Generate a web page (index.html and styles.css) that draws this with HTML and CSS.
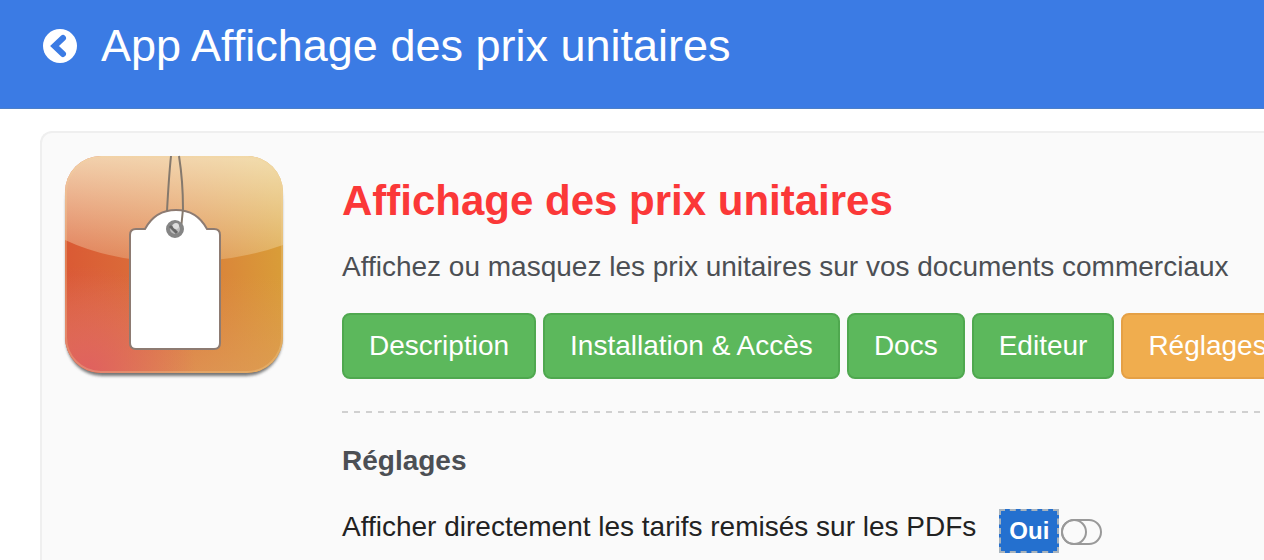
FILE: index.html
```html
<!DOCTYPE html>
<html lang="fr">
<head>
  <meta charset="UTF-8">
  <meta name="viewport" content="width=device-width, initial-scale=1.0">
  <title>App Affichage des prix unitaires</title>
  <link rel="stylesheet" href="styles.css">
</head>
<body>
  <header class="topbar">
    <a href="#" class="back" aria-label="Retour">
      <svg width="34" height="34" viewBox="0 0 34 34" aria-hidden="true">
        <circle cx="17" cy="17" r="17" fill="#fff"/>
        <path d="M20 9 11.500 17 20 25" fill="none" stroke="#3b7be4" stroke-width="6" stroke-linecap="round" stroke-linejoin="miter"/>
      </svg>
    </a>
    <h1>App Affichage des prix unitaires</h1>
  </header>

  <main class="card">
    <svg class="app-icon" width="226" height="230" viewBox="0 0 226 230" aria-hidden="true">
      <defs>
        <linearGradient id="base" x1="0" y1="0.6" x2="1" y2="0.5">
          <stop offset="0" stop-color="#da5934"/>
          <stop offset="0.5" stop-color="#db753b"/>
          <stop offset="1" stop-color="#d99d38"/>
        </linearGradient>
        <radialGradient id="glow" cx="0.1" cy="1" r="0.5">
          <stop offset="0" stop-color="#e0605f"/>
          <stop offset="1" stop-color="#e0605f" stop-opacity="0"/>
        </radialGradient>
        <linearGradient id="bottom" x1="0" y1="0" x2="0" y2="1">
          <stop offset="0.55" stop-color="#e0a060" stop-opacity="0"/>
          <stop offset="1" stop-color="#e0a060" stop-opacity="0.6"/>
        </linearGradient>
        <linearGradient id="shine" x1="0" y1="0" x2="0" y2="1">
          <stop offset="0" stop-color="#f8edcb" stop-opacity="0.8"/>
          <stop offset="1" stop-color="#f8edcb" stop-opacity="0.24"/>
        </linearGradient>
        <clipPath id="tile">
          <rect x="3" y="3" width="218" height="217" rx="36"/>
        </clipPath>
        <filter id="shadow" x="-5%" y="-5%" width="110%" height="112%">
          <feGaussianBlur stdDeviation="1.500"/>
        </filter>
      </defs>
      <rect x="4" y="12" width="216" height="211" rx="36" fill="#555" opacity="0.8" filter="url(#shadow)"/>
      <g clip-path="url(#tile)">
        <rect x="3" y="3" width="218" height="217" fill="url(#base)"/>
        <rect x="3" y="3" width="218" height="217" fill="url(#bottom)"/>
        <rect x="3" y="3" width="218" height="217" fill="url(#glow)"/>
        <path d="M3 3H221V92Q174 109 112 109T3 87Z" fill="url(#shine)"/>
        <rect x="4" y="4" width="216" height="215" rx="35" fill="none" stroke="#f3d59c" stroke-width="2" opacity="0.3"/>
      </g>
      <path d="M74 76H83C90 63 101 57 114 57S138 63 145 76H152Q158 76 158 82V190Q158 196 152 196H74Q68 196 68 190V82Q68 76 74 76Z" fill="#fff" stroke="#8d7b72" stroke-width="2"/>
      <g fill="none" stroke="#85796d" stroke-width="2">
        <path d="M109 3C107 22 106 40 105 58"/>
        <path d="M117 3C120 22 121 42 121 56L119 76"/>
      </g>
      <circle cx="113" cy="76" r="7" fill="#bbb" stroke="#858585" stroke-width="4"/>
      <path d="M108 73 115 80" stroke="#666" stroke-width="3"/>
      <circle cx="114" cy="73" r="3" fill="#ddd"/>
    </svg>

    <div class="content">
      <h2>Affichage des prix unitaires</h2>
      <p class="lead">Affichez ou masquez les prix unitaires sur vos documents commerciaux</p>

      <nav class="tabs">
        <a href="#" class="btn">Description</a>
        <a href="#" class="btn">Installation &amp; Accès</a>
        <a href="#" class="btn">Docs</a>
        <a href="#" class="btn">Editeur</a>
        <a href="#" class="btn btn-active">Réglages</a>
      </nav>

      <section class="settings">
        <h3>Réglages</h3>
        <div class="setting">
          <label for="remises">Afficher directement les tarifs remisés sur les PDFs</label>
          <span class="switch">
            <span class="value">Oui</span>
            <input type="checkbox" id="remises" class="toggle">
          </span>
        </div>
      </section>
    </div>
  </main>
</body>
</html>
```
FILE: styles.css
```css
*,
*::before {
  box-sizing: border-box;
}
body {
  margin: 0;
  font-family: "Liberation Sans", "Helvetica Neue", Arial, sans-serif;
  font-size: 28px;
  line-height: 32px;
  color: #222;
  background: #fff;
  overflow: hidden;
}
h1, h2, h3, p {
  margin: 0;
  white-space: nowrap;
}

/* header */
.topbar {
  display: flex;
  align-items: center;
  gap: 24px;
  padding: 20px 43px 37px;
  background: #3b7be4;
  border-bottom: 1px solid #4c7fc8;
  color: #fff;
}
.topbar h1 {
  font-size: 45px;
  line-height: 51px;
  font-weight: normal;
}
.back {
  display: flex;
}

/* app card */
.card {
  display: flex;
  gap: 54px;
  margin: 22px 0 0 40px;
  padding: 20px 0 0 20px;
  background: #fafafa;
  border: 2px solid #efefef;
  border-width: 2px 0 0 2px;
  border-radius: 12px 0 0 0;
}
.app-icon {
  flex: none;
}
.content {
  flex: 1;
  min-width: 0;
  padding: 22px 0 7px;
}
h2 {
  font-size: 42px;
  line-height: 52px;
  color: #fb3838;
}
.lead {
  margin-top: 24px;
  color: #4c4f54;
}
.tabs {
  display: flex;
  gap: 7px;
  margin-top: 30px;
  padding-bottom: 34px;
  background: repeating-linear-gradient(90deg, #d0d0d0 0 6px, transparent 6px 12px) left bottom / 100% 2px no-repeat;
}
.btn {
  flex: none;
  padding: 15px 25px;
  border: 2px solid #4fa84f;
  border-radius: 8px;
  background: #5cb85c;
  color: #fff;
  text-decoration: none;
  white-space: nowrap;
}
.btn-active {
  background: #f0ad4e;
  border-color: #e5a045;
}

/* settings */
.settings {
  padding-top: 32px;
}
h3 {
  font-size: 28px;
  color: #4c4f54;
}
.setting {
  display: flex;
  align-items: flex-start;
  gap: 23px;
  margin-top: 32px;
  white-space: nowrap;
}
.setting label {
  padding-top: 2px;
}
.switch {
  display: flex;
  align-items: center;
  gap: 2px;
}
.value {
  padding: 4px 8px;
  border: 2px dashed #a9b4bd;
  background: #2470cf;
  color: #fff;
  font-size: 24px;
  font-weight: bold;
}
.toggle {
  appearance: none;
  display: flex;
  width: 41px;
  height: 26px;
  margin: 2px 0 0;
  border: 2px solid #999;
  border-radius: 13px;
}
.toggle::before {
  content: "";
  flex: none;
  width: 26px;
  height: 26px;
  margin: -2px;
  border: 2px solid #999;
  border-radius: 50%;
}
.toggle:checked {
  justify-content: flex-end;
}
```
